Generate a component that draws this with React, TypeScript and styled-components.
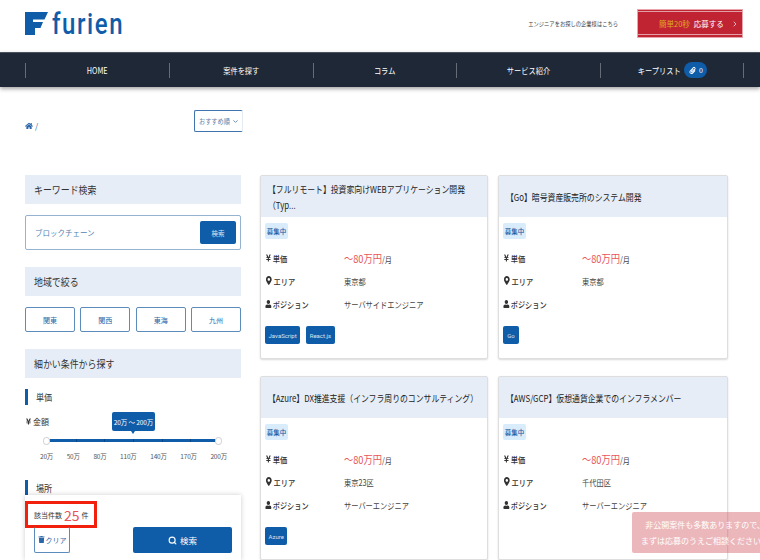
import React from 'react';
import styled, { createGlobalStyle } from 'styled-components';
import { FaHome, FaMapMarkerAlt, FaPaperclip, FaTrash, FaUser, FaYenSign } from 'react-icons/fa';
import { LuChevronDown, LuChevronRight, LuSearch } from 'react-icons/lu';

const GlobalStyle = createGlobalStyle`
    html, body {
        margin: 0;
        padding: 0;
    }
    body {
        font-family: "Noto Sans CJK JP", "Noto Sans", sans-serif;
        color: #333;
    }
    * {
        box-sizing: border-box;
    }
`;

// the text in the design is set tall and narrow
const Narrow = styled.span<{ $origin?: string; $x?: number }>`
    display: inline-block;
    white-space: nowrap;
    transform: scaleX(${(p) => p.$x ?? 0.85});
    transform-origin: ${(p) => p.$origin ?? 'left'} center;
`;

const Page = styled.div`
    position: relative;
    width: 760px;
    height: 560px;
    overflow: hidden;
    background: #fff;
`;

const Header = styled.header`
    height: 52px;
    padding: 9px 17px 0 25px;
    display: flex;
    align-items: flex-start;
    justify-content: space-between;
`;

const Logo = styled.div`
    display: flex;
    align-items: center;
    gap: 4px;
    height: 29px;
`;

const LogoText = styled(Narrow)`
    font-family: "Roboto", sans-serif;
    font-size: 30px;
    font-weight: 500;
    line-height: 30px;
    letter-spacing: 2px;
    color: #0f5ca9;
`;

const HeaderRight = styled.div`
    display: flex;
    align-items: center;
    gap: 19px;
    height: 29px;
`;

const CompanyLink = styled(Narrow)`
    font-size: 6px;
    color: #444;
`;

const ApplyButton = styled.div`
    width: 106px;
    height: 29px;
    padding-left: 21px;
    display: flex;
    flex-shrink: 0;
    align-items: center;
    gap: 4px;
    background: #c02433;
    border: 1px solid #e8a6ac;
    box-shadow: inset 0 1px 0 #c02433, inset 0 2px 0 #e3a0a6, inset 0 -2px 0 #c02433, inset 0 -3px 0 #e3a0a6;
    font-size: 7.5px;
    color: #fff;
    white-space: nowrap;
`;

const ApplyLead = styled.span`
    color: #e0a91e;
`;

const ApplyArrow = styled.span`
    display: flex;
    margin-left: 3px;
`;

const Nav = styled.nav`
    height: 35px;
    padding: 0 16px 0 25px;
    display: grid;
    grid-template-columns: repeat(5, 1fr);
    align-items: center;
    background: #1e2836;
    border-top: 1px solid #4b525c;
    box-shadow: 0 2px 4px rgba(0, 0, 0, 0.35);
`;

const NavItem = styled.div<{ $last?: boolean }>`
    height: 15px;
    padding-right: ${(p) => (p.$last ? '3px' : '0')};
    display: flex;
    align-items: center;
    justify-content: center;
    font-size: 8.5px;
    color: #fff;
    border-left: 1px solid #656c76;
    border-right: ${(p) => (p.$last ? '1px solid #656c76' : 'none')};
`;

const KeepBadge = styled.span`
    width: 23px;
    height: 16px;
    display: flex;
    align-items: center;
    justify-content: center;
    gap: 3px;
    border-radius: 8px;
    background: #0f5ca9;
    font-size: 7px;
`;

const Toolbar = styled.div`
    width: 218px;
    height: 88px;
    margin-left: 25px;
    padding-top: 23px;
    display: flex;
    align-items: flex-start;
    justify-content: space-between;
`;

const Breadcrumb = styled.div`
    margin-top: 10px;
    display: flex;
    align-items: center;
    gap: 2px;
    color: #2a66a8;
    font-size: 8px;
`;

const SortSelect = styled.div`
    width: 49px;
    height: 22px;
    padding-left: 4px;
    display: flex;
    align-items: center;
    border: 1px solid #3f74ad;
    border-right-color: #e4ebf3;
    border-radius: 2px;
    font-size: 7px;
    color: #5b7fa8;
`;

const SortLabel = styled(Narrow)`
    width: 33px;
`;

const Main = styled.main`
    padding-left: 25px;
    display: grid;
    grid-template-columns: 216px 468px;
    column-gap: 19px;
    align-items: start;
`;

const Sidebar = styled.aside`
    display: flex;
    flex-direction: column;
`;

const SectionHead = styled.h2<{ $gap?: number }>`
    height: 29px;
    margin: 0 0 ${(p) => p.$gap ?? 11}px;
    padding-left: 9px;
    display: flex;
    align-items: center;
    background: #e6edf6;
    font-size: 10.5px;
    font-weight: 400;
    color: #333;
`;

const SearchBox = styled.div`
    height: 35px;
    margin-bottom: 17px;
    padding: 0 4px 0 9px;
    display: flex;
    align-items: center;
    justify-content: space-between;
    border: 1px solid #95b2d0;
    border-radius: 2px;
    font-size: 7.5px;
    color: #4f7fb0;
`;

const SearchButton = styled.div`
    width: 36px;
    height: 23px;
    display: flex;
    align-items: center;
    justify-content: center;
    border-radius: 2px;
    background: #0f5ca9;
    font-size: 6.5px;
    color: #dbe7f3;
`;

const AreaRow = styled.div`
    height: 25px;
    margin-bottom: 17px;
    display: grid;
    grid-template-columns: repeat(4, 50px);
    justify-content: space-between;
`;

const AreaButton = styled.div`
    display: flex;
    align-items: center;
    justify-content: center;
    border: 1px solid #5d8cbc;
    border-radius: 2px;
    font-size: 7px;
    color: #2a66a8;
`;

const BarTitle = styled.h3<{ $gap?: number }>`
    height: 16px;
    margin: 0 0 ${(p) => p.$gap ?? 0}px;
    padding-left: 8px;
    display: flex;
    align-items: center;
    border-left: 3px solid #0f5ca9;
    font-size: 9.5px;
    font-weight: 400;
    color: #333;
`;

const PriceLabel = styled.div`
    height: 12px;
    margin-bottom: 7px;
    display: flex;
    align-items: center;
    gap: 1px;
    font-size: 8px;
    color: #333;
`;

const SliderArea = styled.div`
    position: relative;
    height: 46px;
    margin-left: 14px;
    width: 197px;
`;

const SliderTrack = styled.div`
    position: absolute;
    top: 5px;
    left: 8px;
    right: 17px;
    height: 3px;
    background: #0f5ca9;
`;

const SliderTick = styled.i`
    position: absolute;
    top: 0;
    width: 1px;
    height: 3px;
    background: #0b4684;
`;

const SliderKnob = styled.span<{ $end?: boolean }>`
    position: absolute;
    top: 3px;
    ${(p) => (p.$end ? 'right: 14px;' : 'left: 4px;')}
    width: 7px;
    height: 8px;
    border-radius: 50%;
    background: #fff;
    border: 1px solid #d5d5d5;
`;

const SliderTip = styled.div`
    position: absolute;
    top: -22px;
    left: 73px;
    width: 43px;
    height: 19px;
    display: flex;
    align-items: center;
    justify-content: center;
    border-radius: 2px;
    background: #0f5ca9;
    font-size: 6.5px;
    letter-spacing: -0.1px;
    color: #fff;
    white-space: nowrap;

    &::after {
        content: '';
        position: absolute;
        bottom: -3px;
        left: 19px;
        border-left: 2.5px solid transparent;
        border-right: 2.5px solid transparent;
        border-top: 3px solid #0f5ca9;
    }
`;

const SliderScale = styled.div`
    position: absolute;
    top: 17px;
    left: 1px;
    right: 9px;
    display: flex;
    justify-content: space-between;
    font-size: 6.5px;
    letter-spacing: -0.2px;
    color: #555;
`;

const CardGrid = styled.div`
    display: grid;
    grid-template-columns: 228px 230px;
    column-gap: 10px;
    row-gap: 17px;
`;

const Card = styled.article`
    height: 184px;
    display: flex;
    flex-direction: column;
    border: 1px solid #dedede;
    border-radius: 2px;
    box-shadow: 0 1px 2px rgba(0, 0, 0, 0.15);
    background: #fff;
`;

const CardHead = styled.h4`
    height: 41px;
    margin: 0;
    padding: 0 7px;
    display: flex;
    align-items: center;
    flex-shrink: 0;
    background: #e6edf6;
    font-size: 9.5px;
    font-weight: 400;
    line-height: 16px;
    color: #222;
`;

const CardTitle = styled.span`
    display: block;
    width: 121%;
    flex-shrink: 0;
    transform: scaleX(0.826);
    transform-origin: left center;
`;

const CardBody = styled.div`
    padding: 6px 4px 0;
    display: flex;
    flex-direction: column;
    align-items: flex-start;
`;

const StatusTag = styled.span`
    width: 23px;
    height: 16px;
    margin-bottom: 7px;
    display: flex;
    align-items: center;
    justify-content: center;
    border-radius: 2px;
    background: #d9ecfb;
    font-size: 6.5px;
    font-weight: 500;
    color: #0f5ca9;
`;

const InfoRow = styled.div`
    width: 100%;
    height: 23px;
    display: grid;
    grid-template-columns: 79px 1fr;
    align-items: center;
    font-size: 8.5px;
    color: #444;
`;

const InfoLabel = styled(Narrow)`
    display: flex;
    align-items: center;
    gap: 1px;
    font-weight: 500;
    color: #333;
`;

const Price = styled.span`
    font-size: 11px;
    color: #e9535a;
`;

const TagRow = styled.div`
    margin-top: 11px;
    display: flex;
    gap: 6px;
`;

const SkillTag = styled.span`
    height: 18px;
    min-width: 16px;
    padding: 0 3.5px;
    display: flex;
    align-items: center;
    justify-content: center;
    border-radius: 2px;
    background: #0f5ca9;
    font-family: "Roboto", sans-serif;
    font-size: 6px;
    color: #d8e5f2;
`;

const ResultPanel = styled.div`
    position: absolute;
    left: 25px;
    top: 495px;
    width: 216px;
    height: 65px;
    background: #fff;
    box-shadow: 0 0 5px rgba(0, 0, 0, 0.2);
`;

const CountBox = styled.div`
    position: absolute;
    top: 6px;
    left: 0;
    width: 72px;
    height: 27px;
    padding: 1px 0 0 6px;
    display: flex;
    align-items: center;
    gap: 2px;
    border: 3px solid #f0200c;
    font-size: 7px;
    color: #333;
    white-space: nowrap;
`;

const CountValue = styled.strong`
    font-size: 14px;
    font-weight: 400;
    line-height: 14px;
    color: #e9535a;
`;

const PanelActions = styled.div`
    position: absolute;
    left: 9px;
    right: 9px;
    top: 32px;
    height: 26px;
    display: flex;
    justify-content: space-between;
`;

const ClearButton = styled.div`
    width: 36px;
    display: flex;
    align-items: center;
    justify-content: center;
    gap: 1px;
    border: 1px solid #5d8cbc;
    border-top: none;
    border-radius: 2px;
    font-size: 7px;
    color: #2a66a8;
`;

const FindButton = styled.div`
    width: 99px;
    display: flex;
    align-items: center;
    justify-content: center;
    gap: 3px;
    border-radius: 2px;
    background: #0f5ca9;
    font-size: 8.5px;
    color: #fff;
`;

const Notice = styled.div`
    position: absolute;
    left: 632px;
    top: 512px;
    width: 146px;
    height: 41px;
    display: flex;
    flex-direction: column;
    align-items: center;
    justify-content: center;
    border-radius: 2px;
    background: rgba(212, 96, 105, 0.45);
    font-size: 8px;
    line-height: 16px;
    color: #fff;
    white-space: nowrap;
`;

const navItems = ['HOME', '案件を探す', 'コラム', 'サービス紹介'];
const areas = ['関東', '関西', '東海', '九州'];
const scale = ['20万', '50万', '80万', '110万', '140万', '170万', '200万'];

const jobs = [
    {
        title: '【フルリモート】投資家向けWEBアプリケーション開発（Typ...',
        area: '東京都',
        position: 'サーバサイドエンジニア',
        skills: ['JavaScript', 'React.js'],
    },
    { title: '【Go】暗号資産販売所のシステム開発', area: '東京都', position: '', skills: ['Go'] },
    {
        title: '【Azure】DX推進支援（インフラ周りのコンサルティング）',
        area: '東京23区',
        position: 'サーバーエンジニア',
        skills: ['Azure'],
    },
    {
        title: '【AWS/GCP】仮想通貨企業でのインフラメンバー',
        area: '千代田区',
        position: 'サーバーエンジニア',
        skills: [],
    },
];

const LogoMark = () => (
    <svg width="23" height="23" viewBox="0 0 23 23">
        <path d="M0 0H23L19.500 7.500H8V10H18L15.500 16H10V23H0Z" fill="#0f5ca9" />
    </svg>
);

export default function App() {
    return (
        <Page>
            <GlobalStyle />
            <Header>
                <Logo>
                    <LogoMark />
                    <LogoText $x={0.8}>furien</LogoText>
                </Logo>
                <HeaderRight>
                    <CompanyLink $origin="right" $x={0.88}>
                        エンジニアをお探しの企業様はこちら
                    </CompanyLink>
                    <ApplyButton>
                        <ApplyLead>簡単20秒</ApplyLead>
                        <span>応募する</span>
                        <ApplyArrow>
                            <LuChevronRight size={8} />
                        </ApplyArrow>
                    </ApplyButton>
                </HeaderRight>
            </Header>
            <Nav>
                {navItems.map((item) => (
                    <NavItem key={item}>
                        <Narrow $origin="center">{item}</Narrow>
                    </NavItem>
                ))}
                <NavItem $last>
                    <Narrow $origin="center">キープリスト</Narrow>
                    <KeepBadge>
                        <FaPaperclip size={7} />0
                    </KeepBadge>
                </NavItem>
            </Nav>
            <Toolbar>
                <Breadcrumb>
                    <FaHome size={8} /> /
                </Breadcrumb>
                <SortSelect>
                    <SortLabel $x={0.88}>おすすめ順</SortLabel>
                    <LuChevronDown size={7} strokeWidth={3} />
                </SortSelect>
            </Toolbar>
            <Main>
                <Sidebar>
                    <SectionHead>
                        <Narrow>キーワード検索</Narrow>
                    </SectionHead>
                    <SearchBox>
                        ブロックチェーン
                        <SearchButton>検索</SearchButton>
                    </SearchBox>
                    <SectionHead>
                        <Narrow>地域で絞る</Narrow>
                    </SectionHead>
                    <AreaRow>
                        {areas.map((area) => (
                            <AreaButton key={area}>{area}</AreaButton>
                        ))}
                    </AreaRow>
                    <SectionHead>
                        <Narrow>細かい条件から探す</Narrow>
                    </SectionHead>
                    <BarTitle $gap={10}>
                        <Narrow>単価</Narrow>
                    </BarTitle>
                    <PriceLabel>
                        <FaYenSign size={7} />
                        金額
                    </PriceLabel>
                    <SliderArea>
                        <SliderTip>20万 ～ 200万</SliderTip>
                        <SliderTrack>
                            {[1, 2, 3, 4, 5].map((n) => (
                                <SliderTick key={n} style={{ left: `${(n / 6) * 100}%` }} />
                            ))}
                        </SliderTrack>
                        <SliderKnob />
                        <SliderKnob $end />
                        <SliderScale>
                            {scale.map((s) => (
                                <span key={s}>{s}</span>
                            ))}
                        </SliderScale>
                    </SliderArea>
                    <BarTitle>
                        <Narrow>場所</Narrow>
                    </BarTitle>
                </Sidebar>
                <CardGrid>
                    {jobs.map((job) => (
                        <Card key={job.title}>
                            <CardHead>
                                <CardTitle>{job.title}</CardTitle>
                            </CardHead>
                            <CardBody>
                                <StatusTag>募集中</StatusTag>
                                <InfoRow>
                                    <InfoLabel>
                                        <FaYenSign size={8} />
                                        単価
                                    </InfoLabel>
                                    <Narrow $x={0.84}>
                                        <Price>～80万円</Price>/月
                                    </Narrow>
                                </InfoRow>
                                <InfoRow>
                                    <InfoLabel>
                                        <FaMapMarkerAlt size={9} />
                                        エリア
                                    </InfoLabel>
                                    <Narrow>{job.area}</Narrow>
                                </InfoRow>
                                <InfoRow>
                                    <InfoLabel>
                                        <FaUser size={8} />
                                        ポジション
                                    </InfoLabel>
                                    <Narrow>{job.position}</Narrow>
                                </InfoRow>
                                <TagRow>
                                    {job.skills.map((skill) => (
                                        <SkillTag key={skill}>{skill}</SkillTag>
                                    ))}
                                </TagRow>
                            </CardBody>
                        </Card>
                    ))}
                </CardGrid>
            </Main>
            <ResultPanel>
                <CountBox>
                    該当件数 <CountValue>25</CountValue> 件
                </CountBox>
                <PanelActions>
                    <ClearButton>
                        <FaTrash size={7} />
                        クリア
                    </ClearButton>
                    <FindButton>
                        <LuSearch size={9} strokeWidth={3} />
                        検索
                    </FindButton>
                </PanelActions>
            </ResultPanel>
            <Notice>
                <span>非公開案件も多数ありますので、</span>
                <span>まずは応募のうえご相談ください！</span>
            </Notice>
        </Page>
    );
}
